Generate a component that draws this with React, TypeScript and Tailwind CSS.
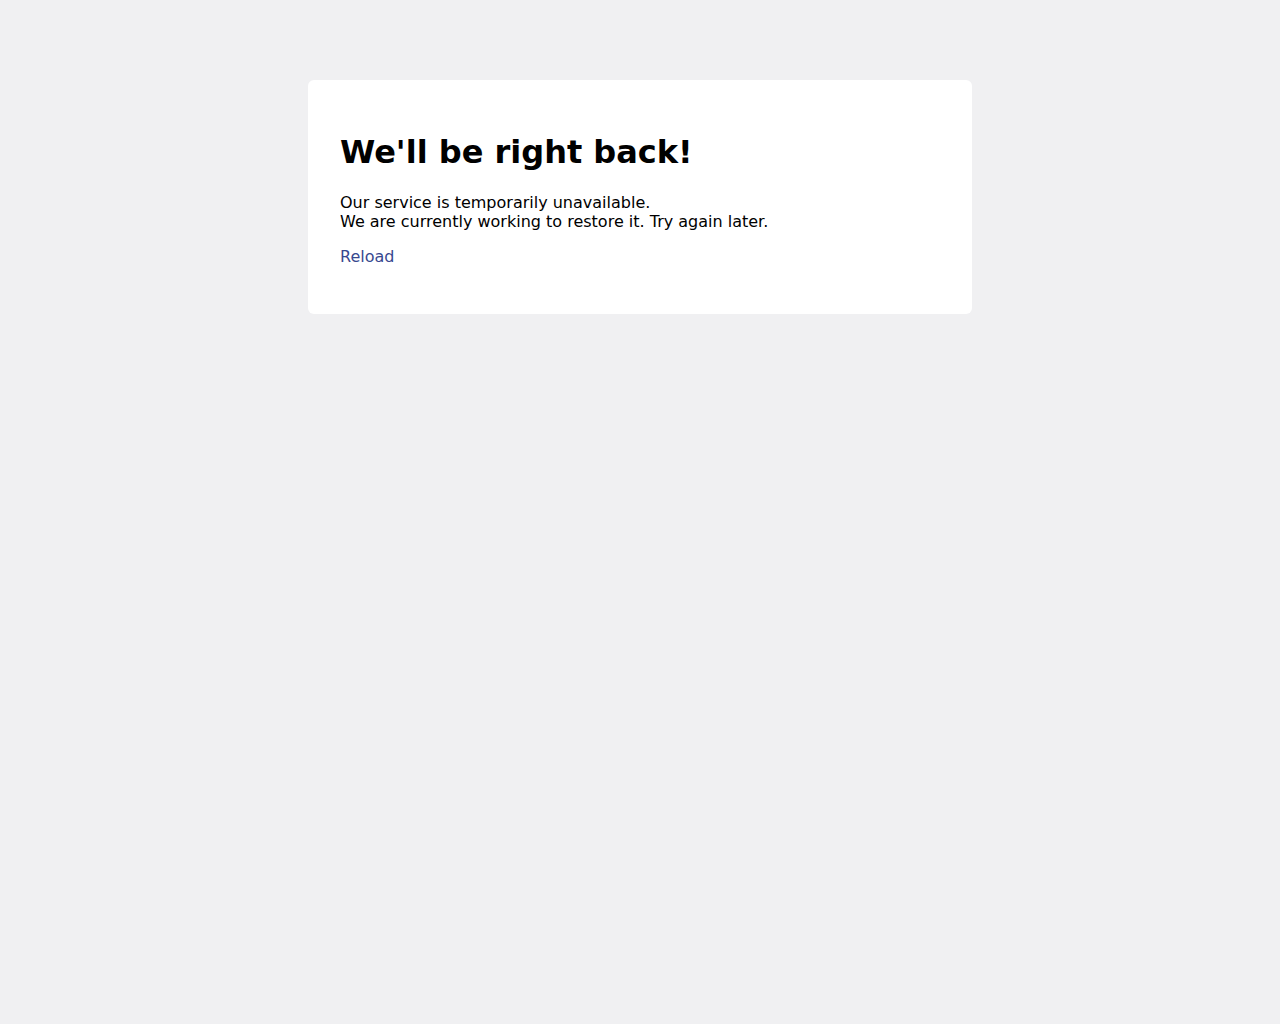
import React from 'react';

const App: React.FC = () => {
  return (
    <div className="min-h-screen bg-[#f0f0f2] pt-20 font-['DejaVu_Sans',sans-serif] text-black">
      <div className="mx-auto w-[664px] rounded-[6px] bg-white p-8">
        <h1 className="mt-[22px] mb-[22px] text-[32px] font-bold leading-[37px]">
          We'll be right back!
        </h1>
        <p className="mb-4 text-base leading-[19px]">
          Our service is temporarily unavailable.
          <br />
          We are currently working to restore it. Try again later.
        </p>
        <p className="mb-4 text-base leading-[19px]">
          <a href="#" className="text-[#38488f]">
            Reload
          </a>
        </p>
      </div>
    </div>
  );
};

export default App;
